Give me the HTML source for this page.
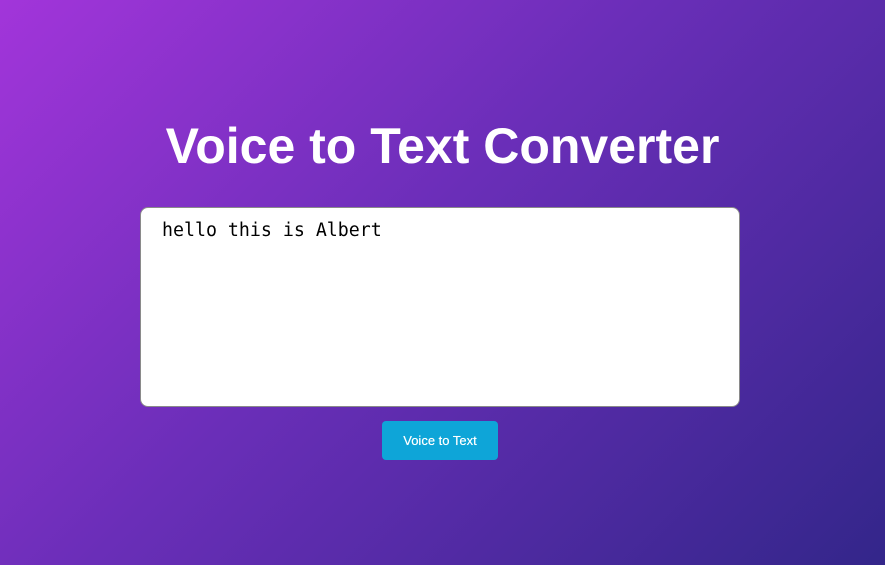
<!DOCTYPE html>
<html><head><style>
html,body{margin:0;width:885px;height:565px;overflow:hidden}
body{background:linear-gradient(135deg,#a235da 0%,#6a2eb8 45%,#33268a 100%);font-family:"Liberation Sans",sans-serif;position:relative}
h1{position:absolute;top:116px;left:0;width:885px;margin:0;text-align:center;color:#fff;font-size:50px;font-weight:bold;line-height:60px}
.ta{position:absolute;left:140px;top:207px;width:598px;height:198px;background:#fff;border:1px solid #8a8a8a;border-radius:8px}
.ta span{position:absolute;left:21px;top:12px;font-family:"DejaVu Sans Mono","Liberation Mono",monospace;font-size:18.25px;color:#000}
.btn{position:absolute;left:382px;top:421px;width:116px;height:39px;background:#0ea5d8;border-radius:4px;color:#fff;font-size:13px;text-align:center;line-height:39px;text-shadow:0 0 0.4px #fff}
</style></head><body>
<h1>Voice to Text Converter</h1>
<div class="ta"><span>hello this is Albert</span></div>
<div class="btn">Voice to Text</div>
</body></html>
